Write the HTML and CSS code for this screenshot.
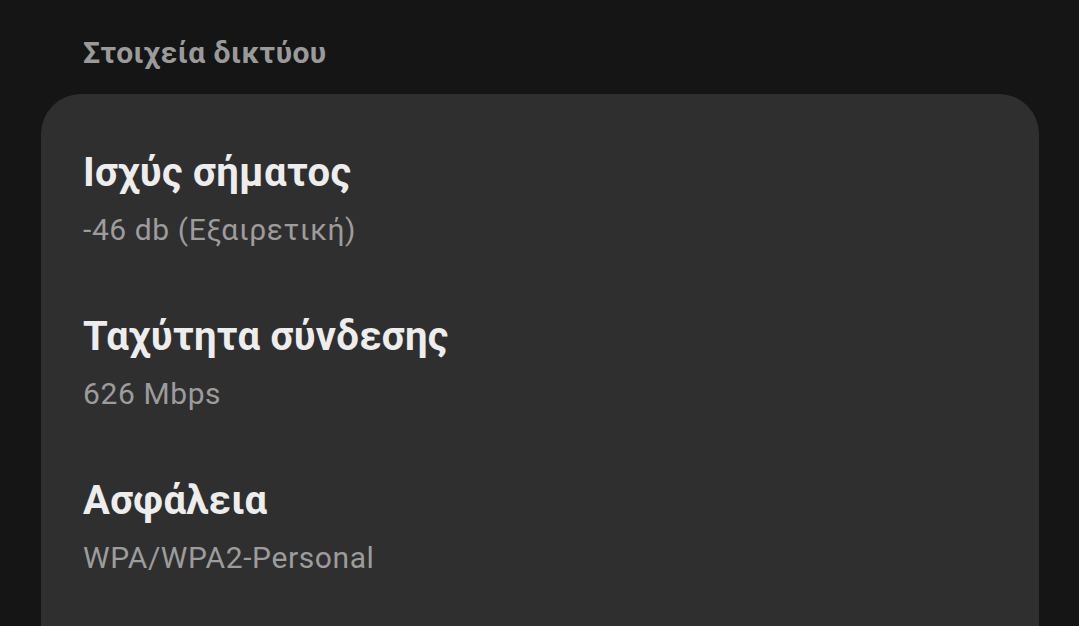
FILE: index.html
```html
<!DOCTYPE html>
<html>
	<head>
		<meta charset="utf-8">
		<link rel="stylesheet" href="styles.css">
	</head>
	<body>
		<div class="section">
			<h2 class="section-title">Στοιχεία δικτύου</h2>
			<div class="card">
				<div class="item">
					<div class="item-title">Ισχύς σήματος</div>
					<div class="item-value">-46 db (Εξαιρετική)</div>
				</div>
				<div class="item">
					<div class="item-title">Ταχύτητα σύνδεσης</div>
					<div class="item-value">626 Mbps</div>
				</div>
				<div class="item">
					<div class="item-title">Ασφάλεια</div>
					<div class="item-value">WPA/WPA2-Personal</div>
				</div>
			</div>
		</div>
	</body>
</html>
```

FILE: styles.css
```css
html {
	height: 100%;
}
body {
	margin: 0;
	background-color: #151515;
	font-family: Roboto, "Noto Sans", sans-serif;
	overflow: hidden;
}
.section {
	padding: 35px 40px 0 41px;
}
.section-title {
	margin: 0 0 23px;
	padding-left: 42px;
	font-size: 30px;
	font-weight: 700;
	line-height: 36px;
	letter-spacing: 0.45px;
	color: #9a9a9a;
}
.card {
	background-color: #2f2f2f;
	border-radius: 40px;
	padding: 55px 42px 60px;
	display: flex;
	flex-direction: column;
	gap: 63px;
	min-height: 600px;
}
.item {
	display: flex;
	flex-direction: column;
	gap: 13px;
}
.item-title {
	font-size: 40px;
	font-weight: 700;
	line-height: 48px;
	letter-spacing: 0.3px;
	color: #ededed;
}
.item-value {
	font-size: 30px;
	line-height: 40px;
	letter-spacing: 0.6px;
	color: #9c9c9c;
}
```
